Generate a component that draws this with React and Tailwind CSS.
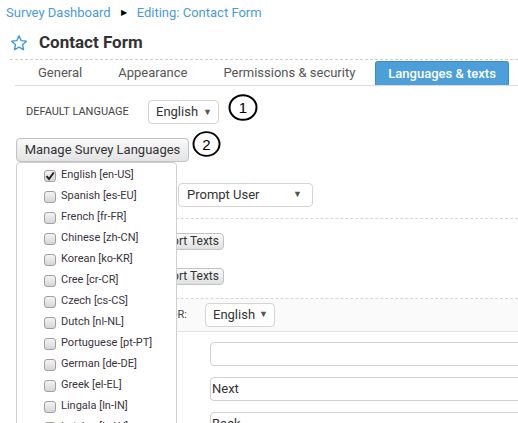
import React from 'react';

const languages = [
  { name: 'English [en-US]', checked: true },
  { name: 'Spanish [es-EU]' },
  { name: 'French [fr-FR]' },
  { name: 'Chinese [zh-CN]' },
  { name: 'Korean [ko-KR]' },
  { name: 'Cree [cr-CR]' },
  { name: 'Czech [cs-CS]' },
  { name: 'Dutch [nl-NL]' },
  { name: 'Portuguese [pt-PT]' },
  { name: 'German [de-DE]' },
  { name: 'Greek [el-EL]' },
  { name: 'Lingala [ln-IN]' },
  { name: 'Latvian [lv-LV]' },
];

const Caret = () => <span className="text-[9px] text-[#555] leading-none">▼</span>;

const Select = ({ label, className }) => (
  <div
    className={`h-[24px] flex items-center justify-between border border-[#d4d4d4] rounded-[4px] bg-white text-[13px] text-[#333] ${className}`}
  >
    <span>{label}</span>
    <Caret />
  </div>
);

const Checkbox = ({ checked }) => (
  <span className="w-[12px] h-[12px] shrink-0 rounded-[3px] border border-[#a0a0a0] bg-gradient-to-b from-[#f4f4f4] to-[#d6d6d6] flex items-center justify-center">
    {checked && (
      <svg width="10" height="10" viewBox="0 0 10 10">
        <path d="M1.5 5.2 L4 8 L8.8 1.5" fill="none" stroke="#222" strokeWidth="2" />
      </svg>
    )}
  </span>
);

const Note = ({ n, className }) => (
  <div className={`absolute flex items-center justify-center ${className}`}>
    <svg className="absolute inset-0" width="100%" height="100%" viewBox="0 0 30 27">
      <ellipse cx="15" cy="13.5" rx="13.5" ry="12.3" fill="none" stroke="#000" strokeWidth="2" />
    </svg>
    <span className="relative text-[15px] text-black leading-none [font-family:'Liberation_Sans',sans-serif]">{n}</span>
  </div>
);

export default function App() {
  return (
    <div className="relative w-[518px] h-[423px] overflow-hidden bg-white [font-family:Roboto,sans-serif]">
      {/* breadcrumb */}
      <div className="h-[26px] pl-[6px] flex items-center text-[13px] text-[#4a9bd4]">
        <span>Survey Dashboard</span>
        <span className="mx-[10px] text-[8px] text-black">▶</span>
        <span>Editing: Contact Form</span>
      </div>

      {/* title */}
      <div className="h-[33px] pl-[10px] flex items-center gap-[11px]">
        <svg width="18" height="18" viewBox="0 0 24 24">
          <path
            d="M12 2.5 L14.9 8.9 L21.8 9.6 L16.6 14.2 L18.1 21 L12 17.5 L5.9 21 L7.4 14.2 L2.2 9.6 L9.1 8.9 Z"
            fill="none"
            stroke="#3d95d6"
            strokeWidth="1.8"
            strokeLinejoin="round"
          />
        </svg>
        <h1 className="text-[17px] font-bold text-[#333]">Contact Form</h1>
      </div>

      <div className="ml-[10px] border-t border-dashed border-[#cfcfcf]" />

      {/* tabs */}
      <div className="ml-[15px] h-[26px] flex items-end border-b border-[#dcdcdc] text-[13px] text-[#555]">
        <div className="h-[25px] flex items-center pl-[23px] pr-[18px]">General</div>
        <div className="h-[25px] flex items-center px-[18px]">Appearance</div>
        <div className="h-[25px] flex items-center px-[18px]">Permissions &amp; security</div>
        <div className="ml-[2px] h-[24px] flex items-center px-[12px] rounded-t-[3px] border border-b-0 border-[#3a8cc9] bg-[#4c9fd9] text-white font-medium">
          Languages &amp; texts
        </div>
      </div>

      {/* default language */}
      <div className="mt-[14px] pl-[26px] flex items-center">
        <span className="w-[122px] text-[11px] text-[#444]">DEFAULT LANGUAGE</span>
        <Select label="English" className="w-[71px] pl-[7px] pr-[6px]" />
      </div>

      <div className="mt-[13px] pl-[16px]">
        <button className="h-[24px] w-[173px] rounded-[4px] border border-[#c2c2c2] bg-gradient-to-b from-[#fafafa] to-[#e3e3e3] text-[13px] text-[#333]">
          Manage Survey Languages
        </button>
      </div>

      {/* content behind the dropdown */}
      <div className="mt-[21px] pl-[178px] flex items-center">
        <Select label="Prompt User" className="w-[135px] pl-[8px] pr-[10px]" />
      </div>

      <div className="mt-[11px] ml-[16px] border-t border-dashed border-[#d6d6d6]" />

      <div className="mt-[14px] w-[224px] flex justify-end">
        <button className="h-[17px] px-[4px] rounded-[4px] border border-[#c2c2c2] bg-gradient-to-b from-[#fafafa] to-[#e0e0e0] text-[12px] leading-none text-[#333]">
          Export Texts
        </button>
      </div>
      <div className="mt-[18px] w-[224px] flex justify-end">
        <button className="h-[17px] px-[4px] rounded-[4px] border border-[#c2c2c2] bg-gradient-to-b from-[#fafafa] to-[#e0e0e0] text-[12px] leading-none text-[#333]">
          Import Texts
        </button>
      </div>

      <div className="mt-[13px] ml-[16px] border-t border-dashed border-[#d6d6d6]" />

      <div className="h-[33px] ml-[16px] flex items-center bg-[#fafafa] border-b border-[#e2e2e2]">
        <span className="w-[171px] text-right text-[11px] text-[#444]">TEXTS FOR:</span>
        <Select label="English" className="ml-[18px] w-[70px] pl-[7px] pr-[6px]" />
      </div>

      <div className="pl-[210px] flex flex-col gap-[11px] mt-[10px]">
        <div className="h-[24px] w-[400px] rounded-[4px] border border-[#d0d0d0]" />
        <div className="h-[24px] w-[400px] rounded-[4px] border border-[#d0d0d0] flex items-center pl-[1px] text-[13px] text-[#333]">
          Next
        </div>
        <div className="h-[24px] w-[400px] rounded-[4px] border border-[#d0d0d0] flex items-center pl-[1px] text-[13px] text-[#333]">
          Back
        </div>
      </div>

      {/* language dropdown */}
      <div className="absolute left-[16px] top-[162px] w-[161px] h-[280px] bg-white border border-[#cfcfcf] rounded-t-[4px] pt-[2px]">
        {languages.map((l) => (
          <div key={l.name} className="h-[21px] pl-[27px] flex items-center gap-[5px] text-[11px] text-[#3b3340]">
            <Checkbox checked={l.checked} />
            <span>{l.name}</span>
          </div>
        ))}
      </div>

      <Note n="1" className="left-[228px] top-[94px] w-[30px] h-[27px]" />
      <Note n="2" className="left-[192px] top-[131px] w-[29px] h-[26px]" />
    </div>
  );
}
